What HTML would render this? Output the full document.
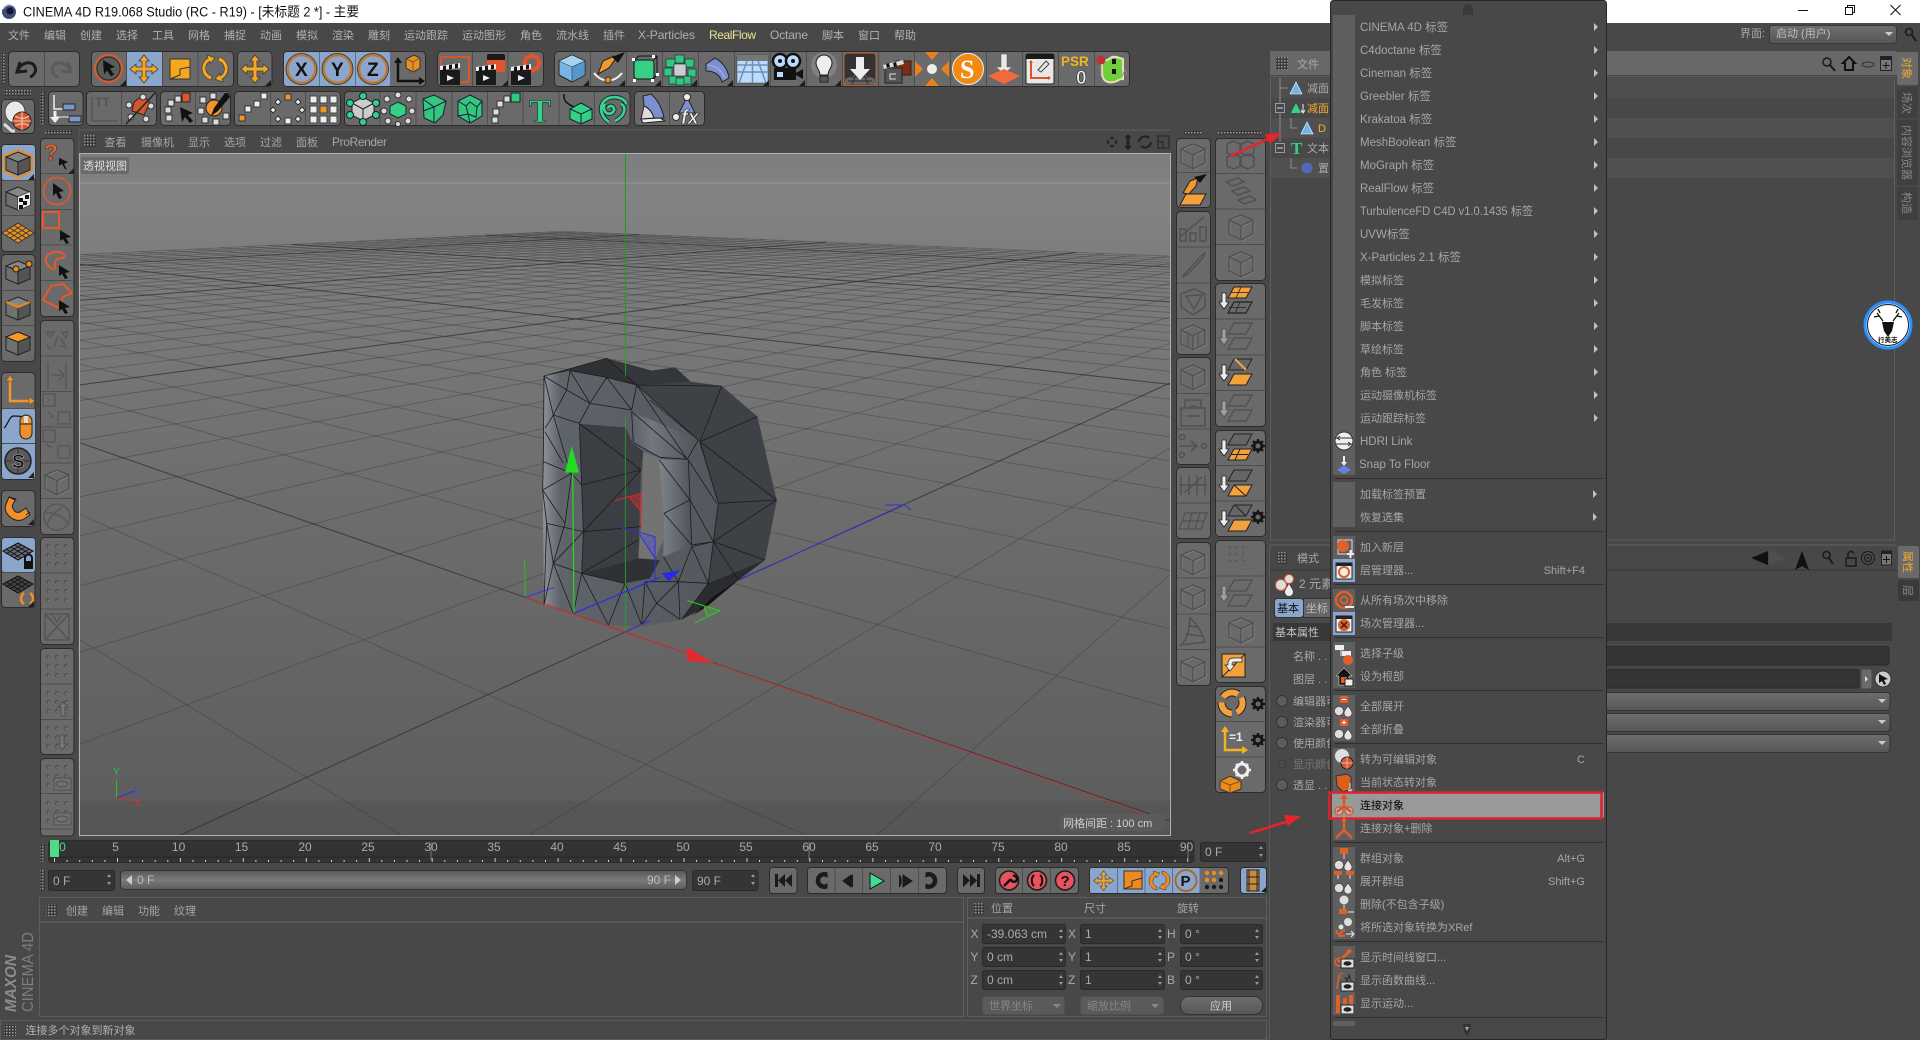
<!DOCTYPE html>
<html lang="zh"><head><meta charset="utf-8"><title>CINEMA 4D</title>
<style>
html,body{margin:0;padding:0;background:#484848;overflow:hidden;width:1920px;height:1040px}
svg{display:block;overflow:hidden}
text{font-family:"Liberation Sans","Noto Sans CJK SC",sans-serif;font-size:11px;fill:#aaa}
.l{font-size:12px}.m{fill:#b0b0b0}.p{fill:#a6a6a6}
.b{font-weight:bold;fill:#111;font-size:19px}
.g{fill:#6a6a6a;stroke:#2c2c2c;stroke-width:1}
.d{stroke:#4e4e4e;stroke-width:1;fill:none}
.f{fill:#353535;stroke:#2a2a2a}
</style></head><body>
<svg xmlns="http://www.w3.org/2000/svg" width="1920" height="1040" viewBox="0 0 1920 1040">
<defs>
<linearGradient id="vb" x1="0" y1="0" x2="0" y2="1"><stop offset="0" stop-color="#7d7d7d"/><stop offset=".06" stop-color="#838383"/><stop offset=".14" stop-color="#7e7e7e"/><stop offset=".5" stop-color="#6d6d6d"/><stop offset=".948" stop-color="#5e5e5e"/><stop offset=".95" stop-color="#575757"/><stop offset="1" stop-color="#555"/></linearGradient>
<linearGradient id="sl" x1="0" y1="0" x2="0" y2="1"><stop offset="0" stop-color="#585858"/><stop offset=".5" stop-color="#7a7a7a"/><stop offset="1" stop-color="#5c5c5c"/></linearGradient>
<linearGradient id="cb" x1="0" y1="0" x2="0" y2="1"><stop offset="0" stop-color="#6e6e6e"/><stop offset="1" stop-color="#565656"/></linearGradient>
<linearGradient id="fc" x1="0" y1="0" x2="1" y2="0"><stop offset="0" stop-color="#8e939a"/><stop offset=".1" stop-color="#5f646b"/><stop offset="1" stop-color="#53575e"/></linearGradient>
<linearGradient id="fr" x1="0" y1="0" x2="1" y2="0"><stop offset="0" stop-color="#80858c"/><stop offset=".4" stop-color="#6d7278"/><stop offset="1" stop-color="#50545a"/></linearGradient>
<linearGradient id="ff" x1="0" y1="0" x2="1" y2="0"><stop offset="0" stop-color="#5d6268"/><stop offset=".3" stop-color="#72777e"/><stop offset="1" stop-color="#505459"/></linearGradient>
<pattern id="gp" width="3" height="3" patternUnits="userSpaceOnUse"><rect width="3" height="3" fill="#3a3a3a"/><rect width="1.5" height="1.5" fill="#9a9a9a"/></pattern>
<clipPath id="vc"><rect x="80" y="154" width="1090" height="681"/></clipPath>
<g id="gc"><polygon points="17,7 29,12 17,17 5,12" fill="#868686" stroke="#222"/><polygon points="5,12 17,17 17,30 5,25" fill="#707070" stroke="#222"/><polygon points="29,12 17,17 17,30 29,25" fill="#545454" stroke="#222"/></g>
<g id="ec" fill="none"><path d="M17 7l12 5v14l-12 6-12-6V12zM5 12l12 6 12-6M17 18v14" stroke="#7d7d7d" stroke-width="1.4" transform="translate(.8,.8)"/><path d="M17 7l12 5v14l-12 6-12-6V12zM5 12l12 6 12-6M17 18v14" stroke="#505050" stroke-width="1.4"/></g>
<g id="ed"><g fill="#535353"><circle cx="8" cy="9" r="2.2"/><circle cx="17" cy="9" r="2.2"/><circle cx="26" cy="9" r="2.2"/><circle cx="8" cy="18" r="2.2"/><circle cx="17" cy="18" r="2.2"/><circle cx="26" cy="18" r="2.2"/><circle cx="8" cy="27" r="2.2"/><circle cx="17" cy="27" r="2.2"/><circle cx="26" cy="27" r="2.2"/></g><g fill="#787878"><circle cx="8.6" cy="9.6" r="1.2"/><circle cx="17.6" cy="9.6" r="1.2"/><circle cx="26.6" cy="9.6" r="1.2"/><circle cx="8.6" cy="18.6" r="1.2"/><circle cx="17.6" cy="18.6" r="1.2"/><circle cx="26.6" cy="18.6" r="1.2"/><circle cx="8.6" cy="27.6" r="1.2"/><circle cx="17.6" cy="27.6" r="1.2"/><circle cx="26.6" cy="27.6" r="1.2"/></g></g>
<path id="mv" d="M18 4l5 6h-3v6h6v-3l6 5-6 5v-3h-6v6h3l-5 6-5-6h3v-6h-6v3l-6-5 6-5v3h6v-6h-3z" fill="#f5a623" stroke="#3a3a3a" stroke-width=".8"/>
<path id="tc" d="M6 6V0L0 6z" fill="#1f1f1f"/>
<g id="dw"><path d="M6 3h4v9h3l-5 7-5-7h3z" fill="#eee" stroke="#222" stroke-width=".8"/></g>
<g id="pl"><polygon points="14,4 32,4 26,15 8,15" fill="none" stroke="#222" stroke-width="1.2"/></g>
<g id="or"><polygon points="14,4 32,4 26,15 8,15" fill="#f3a13c" stroke="#222"/></g>
<g id="gr"><polygon points="14,4 32,4 26,15 8,15" fill="#666" stroke="#222"/></g>
<g id="gear"><circle cx="0" cy="0" r="4" fill="none" stroke="#161616" stroke-width="3"/><path d="M0-7v3M0 4v3M-7 0h3M4 0h3M-5-5l2 2M3 3l2 2M5-5l-2 2M-3 3l-2 2" stroke="#161616" stroke-width="2.2"/></g>
<g id="bd"><circle cx="6" cy="16" r="4.6" fill="#ddd" stroke="#333" stroke-width=".6"/><path d="M15 11c2 3 4 5 4 7a4 4 0 0 1-8 0c0-2 2-4 4-7z" fill="#e4e4e4" stroke="#333" stroke-width=".6"/></g>
<g id="ey"><rect x="8" y="13" width="13" height="9" fill="#ddd" stroke="#222"/><ellipse cx="14.5" cy="17.5" rx="4" ry="2.2" fill="#222"/></g>
</defs>

<rect width="1920" height="1040" fill="#484848"/>
<!-- title bar -->
<rect width="1920" height="23" fill="#fff"/>
<circle cx="9" cy="12" r="7" fill="#3b4c7a"/><circle cx="10" cy="11" r="3.5" fill="#11162c"/><path d="M3 9a7 7 0 0 1 8-4" stroke="#c9c9d9" fill="none" stroke-width="1.5"/>
<text x="23" y="16.5" textLength="336" lengthAdjust="spacingAndGlyphs" style="font-size:13.5px;fill:#111">CINEMA 4D R19.068 Studio (RC - R19) - [未标题 2 *] - 主要</text>
<path d="M1798 10.5h10" stroke="#111"/>
<path d="M1845.5 7.5h7v7h-7zM1847.5 7.5v-2h7v7h-2" fill="none" stroke="#111"/>
<path d="M1890.5 5l10 10M1900.5 5l-10 10" stroke="#111"/>

<!-- main menu -->
<g class="m">
<text class="m" x="8" y="39">文件</text><text class="m" x="44" y="39">编辑</text><text class="m" x="80" y="39">创建</text><text class="m" x="116" y="39">选择</text><text class="m" x="152" y="39">工具</text><text class="m" x="188" y="39">网格</text><text class="m" x="224" y="39">捕捉</text><text class="m" x="260" y="39">动画</text><text class="m" x="296" y="39">模拟</text><text class="m" x="332" y="39">渲染</text><text class="m" x="368" y="39">雕刻</text><text class="m" x="404" y="39">运动跟踪</text><text class="m" x="462" y="39">运动图形</text><text class="m" x="520" y="39">角色</text><text class="m" x="556" y="39">流水线</text><text class="m" x="603" y="39">插件</text><text class="m l" x="638" y="39" textLength="57">X-Particles</text><text x="709" y="39" class="l" textLength="47" style="fill:#e6e68c">RealFlow</text><text class="m l" x="770" y="39" textLength="38">Octane</text><text class="m" x="822" y="39">脚本</text><text class="m" x="858" y="39">窗口</text><text class="m" x="894" y="39">帮助</text>
</g>

<!-- toolbar row 1 -->
<rect x="1" y="52" width="4" height="32" fill="url(#gp)"/>
<rect class="g" x="8.5" y="51.5" width="71" height="35" rx="4"/>
<path class="d" d="M44.5 52v34"/>
<g transform="translate(8,51)"><path d="M12 11l-3 10 10-1M10 19c4-8 14-10 17-3 2 5-2 9-5 10" fill="none" stroke="#1d1d1d" stroke-width="3"/></g>
<g transform="translate(44,51)"><path d="M24 11l3 10-10-1M26 19c-4-8-14-10-17-3-2 5 2 9 5 10" fill="none" stroke="#5b5b5b" stroke-width="3"/></g>

<rect class="g" x="91.5" y="51.5" width="142" height="35" rx="4"/>
<rect x="126" y="52" width="36" height="34" fill="#8aa6cc"/>
<path class="d" d="M126.5 52v34M162.5 52v34M198 52v34"/>
<g transform="translate(91,51)"><circle cx="17.5" cy="17.5" r="13.5" fill="#5c5c5c" stroke="#de5a27" stroke-width="2"/><circle cx="17.5" cy="17.5" r="11.5" fill="none" stroke="#2a2a2a"/><path d="M12 9l12 7-5 1.500 4 6-3 2-4-6-3 4z" fill="#111"/><path d="M29 35h6v-6z" fill="#1d1d1d"/></g>
<use href="#mv" x="126" y="51"/>
<g transform="translate(162,51)"><rect x="8" y="8" width="20" height="20" fill="#f5a81f" stroke="#333"/><path d="M8 28l10-4v-6l10-2" fill="none" stroke="#333"/></g>
<g transform="translate(197,51)"><path d="M22 6a12 12 0 0 1 3 22l1 3-8-3 5-6v3a8 8 0 0 0-2-15zM14 29a12 12 0 0 1-3-22l-1-3 8 3-5 6v-3a8 8 0 0 0 2 15z" fill="#f5a623" stroke="#333" stroke-width=".6"/></g>
<rect class="g" x="237.500" y="51.500" width="34.500" height="35" rx="4"/><use href="#mv" x="237" y="51"/><use href="#tc" x="265" y="80"/>

<rect class="g" x="283.500" y="51.500" width="142" height="35" rx="4"/>
<rect x="284" y="52" width="107" height="34" rx="3" fill="#8aa6cc"/>
<path d="M319.500 52v34M355.500 52v34M390.500 52v34" stroke="#5d6f8c"/>
<g fill="#8aa6cc" stroke="#c2762a" stroke-width="2.500"><circle cx="301.500" cy="69" r="14"/><circle cx="337.500" cy="69" r="14"/><circle cx="373" cy="69" r="14"/></g>
<g fill="none" stroke="#333" stroke-width=".8"><circle cx="301.500" cy="69" r="15.500"/><circle cx="337.500" cy="69" r="15.500"/><circle cx="373" cy="69" r="15.500"/></g>
<text class="b" x="295" y="76">X</text><text class="b" x="331" y="76">Y</text><text class="b" x="367" y="76">Z</text>
<g transform="translate(391,51)"><path d="M7 10v20h24" fill="none" stroke="#111" stroke-width="2.500"/><path d="M3 12l4-6 4 6zM28 26l6 4-6 4z" fill="#111"/><polygon points="15,8 23,4 29,7 29,17 22,21 15,17" fill="#e89028" stroke="#333"/><path d="M15 8l7 3 7-4M22 11v10" fill="none" stroke="#8a4f10"/></g>

<rect class="g" x="437.500" y="51.500" width="106" height="35" rx="4"/>
<path class="d" d="M472.500 52v34M508 52v34"/>
<g transform="translate(437,51)"><path d="M4 26V6h28v25H22" fill="none" stroke="#d9552a" stroke-width="2"/><rect x="3" y="19" width="20" height="15" fill="#1a1a1a"/><path d="M3 15l20-3v5l-20 2z" fill="#eee"/><path d="M6 15l3-.5v4.500l-3 .5zM12 14l3-.5v4.500l-3 .5zM18 13l3-.5v4.500l-3 .5z" fill="#111"/><path d="M10 24l7 3-7 3z" fill="#eee"/></g>
<g transform="translate(473,51)"><rect x="14" y="3" width="18" height="18" rx="2" fill="#1a1a1a"/><rect x="14" y="9" width="18" height="12" fill="#e2552a"/><rect x="3" y="19" width="20" height="15" fill="#1a1a1a"/><path d="M3 16l20-3v5l-20 2z" fill="#eee"/><path d="M6 16l3-.5v4.500l-3 .5zM12 15l3-.5v4.500l-3 .5zM18 14l3-.5v4.500l-3 .5z" fill="#111"/><path d="M10 24l7 3-7 3z" fill="#eee"/><use href="#tc" x="29" y="29"/></g>
<g transform="translate(508,51)"><circle cx="24" cy="12" r="7" fill="none" stroke="#e2552a" stroke-width="4"/><path d="M24 2v4M24 18v4M14 12h4M30 12h4M17 5l3 3M28 16l3 3M31 5l-3 3M20 16l-3 3" stroke="#e2552a" stroke-width="2.500"/><rect x="3" y="19" width="20" height="15" fill="#1a1a1a"/><path d="M3 16l20-3v5l-20 2z" fill="#eee"/><path d="M6 16l3-.5v4.500l-3 .5zM12 15l3-.5v4.500l-3 .5zM18 14l3-.5v4.500l-3 .5z" fill="#111"/><path d="M10 24l7 3-7 3z" fill="#eee"/></g>

<rect class="g" x="554.500" y="51.500" width="575" height="35" rx="4"/>
<path class="d" d="M590.500 52v34M626.500 52v34M662.500 52v34M698.500 52v34M734.500 52v34M770.500 52v34M806.500 52v34M842.500 52v34M878.500 52v34M914.500 52v34M950.500 52v34M986.500 52v34M1022.500 52v34M1058.500 52v34M1094.500 52v34"/>
<g transform="translate(554,51)"><polygon points="18,4 31,10 31,24 18,31 5,24 5,10" fill="#78b4e6" stroke="#222"/><polygon points="18,4 31,10 18,16 5,10" fill="#a6d2f2" stroke="#222" stroke-width=".5"/><polygon points="18,16 31,10 31,24 18,31" fill="#5796cc" stroke="#222" stroke-width=".5"/><use href="#tc" x="29" y="29"/></g>
<g transform="translate(590,51)"><path d="M24 5L13 10 8 23l11-6 7-10z" fill="#f09a2a" stroke="#222"/><path d="M22 6l13-5-7 11z" fill="#111"/><path d="M4 22c8 10 20 10 28 0" fill="none" stroke="#eee" stroke-width="2"/><circle cx="18" cy="29" r="3" fill="#e88a1c" stroke="#333"/><use href="#tc" x="29" y="29"/></g>
<g transform="translate(626,51)"><rect x="8" y="9" width="20" height="19" rx="3" fill="#35d083" stroke="#111"/><path d="M8 9l5-4h18v18l-3 5M28 9l3-4" fill="none" stroke="#111"/><g fill="#fff"><rect x="6" y="7" width="3" height="3"/><rect x="26" y="4" width="3" height="3"/><rect x="30" y="22" width="3" height="3"/><rect x="7" y="28" width="3" height="3"/><rect x="25" y="28" width="3" height="3"/></g><use href="#tc" x="29" y="29"/></g>
<g transform="translate(662,51)" stroke="#123" stroke-width=".6"><g fill="#35c67e"><rect x="13" y="4" width="9" height="8"/><rect x="23" y="8" width="9" height="8"/><rect x="4" y="8" width="9" height="8"/><rect x="2" y="17" width="8" height="8"/><rect x="26" y="18" width="8" height="8"/><rect x="7" y="25" width="8" height="8"/><rect x="21" y="25" width="8" height="8"/><rect x="14" y="27" width="8" height="7"/></g><rect x="12" y="13" width="12" height="12" fill="#ccc"/><use href="#tc" x="29" y="29"/></g>
<g transform="translate(698,51)"><path d="M8 13L17 7C25 11 30 19 31 27L24 31C22 24 17 20 8 20Z" fill="#7c8fcf" stroke="#222"/><path d="M10 14C18 15 24 20 27 28" fill="none" stroke="#a8b6e6"/><use href="#tc" x="29" y="29"/></g>
<g transform="translate(734,51)"><rect x="3" y="4" width="31" height="28" fill="#bcdcff" stroke="#333" stroke-width=".5"/><rect x="3" y="4" width="31" height="6" fill="#777"/><path d="M3 14h31M3 21h31M13 10l-8 22M24 10l8 22M18.500 10v22" stroke="#6d8fb4" stroke-width="1.500" fill="none"/><use href="#tc" x="29" y="29"/></g>
<g transform="translate(770,51)"><circle cx="10" cy="10" r="7" fill="#bcdcff" stroke="#111" stroke-width="2.500"/><circle cx="23" cy="10" r="7" fill="#bcdcff" stroke="#111" stroke-width="2.500"/><circle cx="10" cy="10" r="2" fill="#111"/><circle cx="23" cy="10" r="2" fill="#111"/><rect x="4" y="17" width="22" height="12" fill="#111"/><rect x="7" y="21" width="6" height="5" fill="#bcdcff"/><path d="M26 22l7-4v10l-7-4z" fill="#111"/><use href="#tc" x="29" y="29"/></g>
<g transform="translate(806,51)"><circle cx="18" cy="14" r="13" fill="#9a9a9a" opacity=".5"/><path d="M18 4a8 8 0 0 1 8 8c0 5-4 7-4 12h-8c0-5-4-7-4-12a8 8 0 0 1 8-8z" fill="#eee" stroke="#222"/><rect x="14" y="25" width="8" height="6" fill="#555" stroke="#222"/><use href="#tc" x="29" y="29"/></g>
<g transform="translate(842,51)"><rect x="2" y="2" width="32" height="32" rx="3" fill="#333" stroke="#c5662a"/><path d="M3 28l15-6 15 6v5H3z" fill="#666"/><path d="M9 26l18 0M6 30h24M14 23l-4 10M22 23l4 10" stroke="#2a2a2a"/><path d="M14 6h8v12h6L18 29 8 18h6z" fill="#eee"/></g>
<g transform="translate(878,51)"><rect x="18" y="10" width="15" height="14" fill="#7e2c14" stroke="#222"/><rect x="7" y="17" width="17" height="15" fill="#555" stroke="#222"/><path d="M5 14l20-5 1 4-20 5z" fill="#ddd"/><path d="M8 13l3-1 1 4-3 1zM15 12l3-1 1 4-3 1z" fill="#111"/><path d="M18 23h-6v5h6" stroke="#ddd" fill="none"/></g>
<g transform="translate(914,51)"><circle cx="18" cy="18" r="5" fill="#eee"/><path d="M11 1h14l-7 8zM11 35h14l-7-8zM1 10v16l8-8zM35 10v16l-8-8z" fill="#e8801e"/></g>
<g transform="translate(950,51)"><circle cx="18" cy="18" r="15.500" fill="#f08a12" stroke="#eee" stroke-width="1"/><text x="10" y="27" style="font:bold 26px 'Liberation Serif';fill:#fff">S</text></g>
<g transform="translate(986,51)"><path d="M15 3h6v13h5l-8 7-8-7h5z" fill="#e9e9e9" stroke="#555" stroke-width=".5"/><polygon points="18,18 34,25 18,33 2,25" fill="#f06a3c"/></g>
<g transform="translate(1022,51)"><rect x="4" y="3" width="28" height="30" rx="2" fill="#e8e8e8" stroke="#222"/><rect x="4" y="3" width="28" height="5" fill="#1a1a1a"/><path d="M9 10v17h19" fill="none" stroke="#d9552a" stroke-width="2"/><path d="M7 12l2-3 2 3zM26 25l3 2-3 2z" fill="#d9552a"/><path d="M16 19l8-9 3 3-8 8z" fill="none" stroke="#444"/></g>
<text x="1061" y="66" style="font:bold 13.500px 'Liberation Sans';fill:#f5b31e">PSR</text>
<text x="1076" y="84" style="font:bold 19px 'Liberation Sans';fill:#eee;stroke:#222;stroke-width:.6">0</text>
<g transform="translate(1094,51)"><path d="M8 12c0 10-1 17 6 19s12-4 15-3V8c-6-2-10-4-14 0-2 2-4 0-7 4z" fill="#6ecf3a" stroke="#e9dfb5" stroke-width="2"/><circle cx="7" cy="9" r="4.500" fill="#c03030"/><path d="M7 13v12" stroke="#9a9a9a"/><rect x="18" y="8" width="4" height="5" fill="#111"/><rect x="18" y="18" width="4" height="5" fill="#111"/><path d="M28 25l3-6 2 5" stroke="#888" fill="none"/></g>

<!-- toolbar row 2 -->
<rect x="4" y="90" width="27" height="6" fill="url(#gp)"/>
<rect x="40" y="91" width="5" height="34" fill="url(#gp)"/>
<rect class="g" x="1.500" y="99.500" width="33" height="34" rx="4"/>
<g transform="translate(1,99)"><ellipse cx="14" cy="13" rx="10" ry="11" fill="#e9e9e9" stroke="#444"/><circle cx="21" cy="22" r="9" fill="#d9552a" stroke="#222"/><path d="M12 22h18M21 13v18M14 17c5 3 10 3 14 0M14 27c5-3 10-3 14 0" stroke="#eee" fill="none" stroke-width=".8"/><path d="M3 25l8 7h3" stroke="#ddd" stroke-width="3" fill="none"/></g>
<rect class="g" x="48.500" y="91.500" width="34.500" height="34" rx="4"/>
<g transform="translate(48,91)"><path d="M6 4v14h12M8 22v0" stroke="#eee" stroke-width="1.500" fill="none"/><path d="M7 20v8" stroke="#eee" stroke-width="3"/><path d="M2 26h10l-5 6z" fill="#eee"/><rect x="15" y="13" width="12" height="6" fill="#7c97c6" stroke="#222"/><rect x="21" y="25" width="12" height="6" fill="#7c97c6" stroke="#222"/><path d="M8 26h13" stroke="#eee"/></g>
<rect class="g" x="86.500" y="91.500" width="70" height="34" rx="4"/><path class="d" d="M121.500 92v33"/>
<g transform="translate(86,91)" opacity=".8"><path d="M6 6v24h26" fill="none" stroke="#545454" stroke-width="1.500"/><text x="9" y="15" style="fill:#4f4f4f;font-size:12px;font-weight:bold">TT</text></g>
<g transform="translate(122,91)"><polygon points="12,11 21,4 28,12 22,24 10,20" fill="#d9552a" stroke="#222" opacity=".95"/><g fill="#ddd" stroke="#333"><circle cx="21" cy="6" r="3"/><circle cx="7" cy="14" r="3"/><circle cx="29" cy="15" r="3"/><circle cx="9" cy="26" r="3"/><circle cx="24" cy="28" r="3"/></g><path d="M4 33L33 2" stroke="#222" stroke-width="1.500"/></g>
<rect class="g" x="160.500" y="91.500" width="70" height="34" rx="4"/><path class="d" d="M195.500 92v33"/>
<g transform="translate(160,91)"><g fill="#ddd" stroke="#333"><rect x="6" y="24" width="6" height="6"/><rect x="5" y="16" width="6" height="6"/><rect x="8" y="9" width="6" height="6"/><rect x="15" y="5" width="6" height="6"/></g><rect x="22" y="2" width="8" height="9" fill="#d9552a" stroke="#222"/><path d="M20 16l2 15 3-5 5 6 3-2-5-6 5-2z" fill="#111"/></g>
<g transform="translate(196,91)"><g fill="#ddd" stroke="#333"><rect x="4" y="6" width="6" height="6"/><rect x="14" y="2" width="6" height="6"/><rect x="2" y="17" width="6" height="6"/><rect x="6" y="26" width="6" height="6"/><rect x="17" y="28" width="6" height="6"/><rect x="27" y="22" width="6" height="6"/></g><circle cx="18" cy="17" r="8" fill="#f0962a" stroke="#222"/><path d="M32 2l-3 0-11 15-3 8 7-5 12-14z" fill="#111"/></g>
<rect class="g" x="234.500" y="91.500" width="106" height="34" rx="4"/><path class="d" d="M270.500 92v33M305.500 92v33"/>
<g transform="translate(234,91)" stroke="#333"><rect x="5" y="24" width="6" height="6" fill="#f0962a"/><rect x="11" y="15" width="6" height="6" fill="#eee"/><rect x="20" y="10" width="6" height="6" fill="#eee"/><rect x="27" y="2" width="6" height="6" fill="#eee"/></g>
<g transform="translate(270,91)" stroke="#333" fill="#eee"><rect x="15" y="3" width="6" height="6" fill="#f0962a"/><path d="M8 8l3 3-3 3-3-3zM28 8l3 3-3 3-3-3zM3 16l3 3-3 3-3-3zM32 16l3 3-3 3-3-3zM8 25l3 3-3 3-3-3zM28 25l3 3-3 3-3-3z"/><rect x="15" y="27" width="6" height="6"/></g>
<g transform="translate(306,91)" stroke="#444" fill="#eee"><rect x="4" y="5" width="7" height="7"/><rect x="14" y="5" width="7" height="7"/><rect x="24" y="5" width="7" height="7"/><rect x="4" y="15" width="7" height="7"/><rect x="14" y="15" width="7" height="7" fill="#f0962a"/><rect x="24" y="15" width="7" height="7"/><rect x="4" y="25" width="7" height="7"/><rect x="14" y="25" width="7" height="7"/><rect x="24" y="25" width="7" height="7"/></g>
<rect class="g" x="344.500" y="91.500" width="285.500" height="34" rx="4"/><path class="d" d="M380 92v33M416 92v33M452 92v33M487.500 92v33M523 92v33M559 92v33M594.500 92v33"/>
<g transform="translate(345,91)"><polygon points="18,6 29,12 29,24 18,30 7,24 7,12" fill="#ccc" stroke="#222"/><path d="M7 12l11 6 11-6M18 18v12" stroke="#222" fill="none"/><g fill="#35d083" stroke="#123"><circle cx="18" cy="5" r="3.500"/><circle cx="5" cy="12" r="3.500"/><circle cx="31" cy="12" r="3.500"/><circle cx="5" cy="24" r="3.500"/><circle cx="31" cy="24" r="3.500"/><circle cx="18" cy="31" r="3.500"/></g></g>
<g transform="translate(380,91)"><polygon points="18,11 26,15 26,23 18,27 10,23 10,15" fill="#35d083" stroke="#123"/><g fill="#ddd" stroke="#333"><circle cx="18" cy="4" r="3"/><circle cx="7" cy="8" r="3"/><circle cx="29" cy="8" r="3"/><circle cx="4" cy="20" r="3"/><circle cx="32" cy="20" r="3"/><circle cx="8" cy="30" r="3"/><circle cx="28" cy="30" r="3"/><circle cx="18" cy="33" r="2.500"/></g></g>
<g transform="translate(416,91)"><path d="M7 8l11-4 12 6-3 14-8 8-11-5z" fill="#35c67e" stroke="#123"/><path d="M7 8l11 8 12-6M18 16v15M7 20l11-4" stroke="#123" fill="none"/></g>
<g transform="translate(452,91)"><polygon points="18,4 30,10 30,25 18,32 6,25 6,10" fill="#35c67e" stroke="#123"/><path d="M6 10l8 5 4-4 7 5 5-6M14 15l2 8-10 2M16 23l8 3 1-10M18 32l-2-9" stroke="#123" fill="none"/></g>
<g transform="translate(487,91)"><g fill="#ddd" stroke="#333"><rect x="5" y="26" width="6" height="6"/><rect x="6" y="18" width="6" height="6"/><rect x="10" y="10" width="6" height="6"/><rect x="17" y="5" width="6" height="6"/></g><rect x="24" y="2" width="9" height="9" fill="#35c67e" stroke="#123"/></g>
<text x="529" y="122" style="font:bold 33px 'Liberation Serif';fill:#39d28a;stroke:#123;stroke-width:.6">T</text>
<g transform="translate(559,91)"><path d="M5 3c-1 8 4 10 12 14" fill="none" stroke="#111" stroke-width="1.500"/><polygon points="22,12 33,18 33,28 22,33 11,28 11,18" fill="#35d083" stroke="#123"/><path d="M11 18l11 5 11-5M22 23v10" stroke="#123" fill="none"/></g>
<g transform="translate(595,91)" fill="none" stroke="#123" stroke-width="4.500"><path d="M14 31c-10-6-11-20 0-24 10-3 18 3 17 6"/><path d="M10 13c-4 6 3 13 8 8 4-4-3-9-5-4"/><path d="M20 30c10-5 12-14 6-17"/></g>
<g transform="translate(595,91)" fill="none" stroke="#3ad28c" stroke-width="2.800"><path d="M14 31c-10-6-11-20 0-24 10-3 18 3 17 6"/><path d="M10 13c-4 6 3 13 8 8 4-4-3-9-5-4"/><path d="M20 30c10-5 12-14 6-17"/></g>
<rect class="g" x="634.500" y="91.500" width="70" height="34" rx="4"/><path class="d" d="M669.500 92v33"/>
<g transform="translate(634,91)"><path d="M7 28l19-1 5 3-22 2z" fill="#eee" stroke="#222"/><path d="M9 5l8-2c7 6 11 14 13 24l-10 0c-2-6-5-10-10-12z" fill="#7c8fcf" stroke="#222"/><path d="M10 15c5 2 8 6 10 12l-13 1z" fill="#ddd" stroke="#222"/></g>
<g transform="translate(670,91)"><polygon points="17,6 25,22 9,22" fill="#7c8fcf" stroke="#222"/><circle cx="17" cy="6" r="3.500" fill="#eee" stroke="#333"/><circle cx="6" cy="26" r="3.500" fill="#eee" stroke="#333"/><text x="11" y="33" style="font:italic bold 20px 'Liberation Sans';fill:#eee;stroke:#222;stroke-width:.6">fx</text></g>

<!-- left column 1 -->
<rect class="g" x="1.500" y="144.500" width="33.500" height="107" rx="4"/>
<rect x="2" y="145" width="33" height="35" rx="3" fill="#8aa6cc"/>
<path class="d" d="M2 180.500h33M2 215.500h33"/>
<g transform="translate(1,145)"><use href="#gc"/><polygon points="17,5 31,11 31,26 17,33 3,26 3,11" fill="none" stroke="#f08a12" stroke-width="2"/><use href="#tc" x="27" y="29"/></g>
<g transform="translate(1,180)"><use href="#gc"/><g fill="#111"><polygon points="17,17 29,12 29,25 17,30" fill="#eee"/><rect x="18" y="18" width="4" height="4"/><rect x="24" y="15" width="4" height="4"/><rect x="22" y="21" width="4" height="4"/><rect x="18" y="25" width="4" height="4"/></g></g>
<g transform="translate(1,215)"><polygon points="17,8 33,18 17,28 1,18" fill="#e8901e" stroke="#333"/><path d="M9 13l16 10M13 10.500l16 10M5 15.500l16 10M25 13L9 23M21 10.500L5 20.500M29 15.500l-16 10" stroke="#333" stroke-width=".8"/></g>
<rect class="g" x="1.500" y="254.500" width="33.500" height="107" rx="4"/><path class="d" d="M2 290.500h33M2 325.500h33"/>
<g transform="translate(1,254)"><use href="#gc"/><circle cx="15" cy="15" r="3" fill="#f08a12" stroke="#222"/><circle cx="28" cy="10" r="3" fill="#f08a12" stroke="#222"/></g>
<g transform="translate(1,290)"><use href="#gc"/><path d="M5 12l12 5 12-5" stroke="#f08a12" stroke-width="2" fill="none"/></g>
<g transform="translate(1,325)"><use href="#gc"/><polygon points="17,7 29,12 17,17 5,12" fill="#f39a2a" stroke="#222"/></g>
<rect class="g" x="1.500" y="372.500" width="33.500" height="107" rx="4"/>
<rect x="2" y="408" width="33" height="71" rx="3" fill="#8aa6cc"/><path class="d" d="M2 408.500h33M2 443.500h33"/>
<g transform="translate(1,372)"><path d="M9 7v22h21" fill="none" stroke="#f0962a" stroke-width="2.500"/><path d="M5 9l4-6 4 6zM28 25l6 4-6 4z" fill="#f0962a" stroke="#333" stroke-width=".4"/></g>
<g transform="translate(1,408)"><path d="M3 20c4-3 5-12 10-12 3 0 6 0 9 1" fill="none" stroke="#111" stroke-width="1.200"/><rect x="19" y="7" width="12" height="24" rx="6" fill="#f0902a" stroke="#222"/><path d="M19 16h12M25 7v9" stroke="#222"/><rect x="23" y="8" width="4" height="7" fill="#ddd"/></g>
<g transform="translate(1,443)"><circle cx="17" cy="18" r="13" fill="#5a5a5a" stroke="#222" stroke-width="1.500"/><path d="M4 18h26M17 5v26" stroke="#333"/><text x="11" y="25" style="font:bold 19px 'Liberation Sans';fill:#111;stroke:#fff;stroke-width:.3">S</text><use href="#tc" x="27" y="29"/></g>
<rect class="g" x="1.500" y="490.500" width="33.500" height="36" rx="4"/>
<g transform="translate(1,490)"><path d="M8 7l-3 7c-2 5 0 9 3 12 4 4 10 6 15 3l6-4-4-7-6 4c-3 1-5 0-6-2-2-2-2-4-1-6l3-5z" fill="#f0902a" stroke="#222"/><path d="M8 7l6 3M25 25l4-3" stroke="#222"/><use href="#tc" x="27" y="29"/></g>
<rect class="g" x="1.500" y="537.500" width="33.500" height="70" rx="4"/>
<rect x="2" y="538" width="33" height="34" rx="3" fill="#8aa6cc"/><path class="d" d="M2 572.500h33"/>
<g transform="translate(1,537)"><polygon points="17,6 32,14 17,23 2,14" fill="#667" stroke="#111"/><path d="M10 10l15 9M5 12l15 9M14 8l15 9M24 10L9 19M28 12l-15 9M20 8L5 17" stroke="#111" stroke-width=".8"/><rect x="23" y="24" width="9" height="8" fill="#111"/><path d="M24 24v-3a3.500 3.500 0 0 1 7 0v3" fill="none" stroke="#111" stroke-width="2"/></g>
<g transform="translate(1,572)"><polygon points="17,4 32,12 17,21 2,12" fill="#444" stroke="#111"/><path d="M10 8l15 9M5 10l15 9M14 6l15 9M24 8L9 17M28 10l-15 9M20 6L5 15" stroke="#111" stroke-width=".8"/><path d="M23 21c-4 3-4 8 0 11M29 21c4 3 4 8 0 11" stroke="#f0902a" stroke-width="2.500" fill="none"/><use href="#tc" x="27" y="29"/></g>

<!-- left column 2 -->
<rect x="45" y="130" width="27" height="5" fill="url(#gp)"/>
<rect class="g" x="40.500" y="138.500" width="33.500" height="178" rx="4"/><path class="d" d="M41 173.500h33M41 209.500h33M41 245h33M41 280.500h33"/>
<g transform="translate(40,138)"><text x="4" y="22" style="font:bold 23px 'Liberation Sans';fill:#f0622a;stroke:#333;stroke-width:.5">?</text><path d="M19 20l9 4-4 2 3 6-2-1-3-5-3 2z" fill="#111"/><use href="#tc" x="28" y="30"/></g>
<g transform="translate(40,173)"><circle cx="17" cy="18" r="13.500" fill="none" stroke="#e8582a" stroke-width="1.500"/><path d="M13 10l11 8-5 1 3 6-3 1-3-6-3 3z" fill="#111"/></g>
<g transform="translate(40,209)"><rect x="3" y="3" width="16" height="16" fill="none" stroke="#e8582a" stroke-width="2"/><path d="M20 21l11 7-5 1 3 5-3 1-3-5-3 2z" fill="#111"/></g>
<g transform="translate(40,245)"><path d="M6 17c-2-8 8-12 16-9 4 2 3 5-1 5-5 0-7 4-6 9 1 4-5 3-9-5z" fill="none" stroke="#e8582a" stroke-width="2"/><path d="M19 20l11 7-5 1 3 5-3 1-3-5-3 2z" fill="#111"/></g>
<g transform="translate(40,280)"><path d="M3 20L11 6l12-2 9 9-9 4-4 11z" fill="none" stroke="#e8582a" stroke-width="2"/><path d="M19 20l11 7-5 1 3 5-3 1-3-5-3 2z" fill="#111"/></g>
<rect class="g" x="40.500" y="320.500" width="33.500" height="214" rx="4"/><path class="d" d="M41 356h33M41 391.500h33M41 427h33M41 463h33M41 498.500h33"/>
<g fill="none" stroke="#585858" stroke-width="1.500"><path d="M46 332h8l-4 5zM68 332h-6l4 6zM46 345l6 4M60 345l8 4M58 335l-4 12M60 338l6 8"/><path d="M48 362v27M66 362v27M52 375h10M58 369l6 6-6 6"/><rect x="43" y="394" width="12" height="12"/><rect x="58" y="412" width="12" height="12"/><path d="M48 412l6 6"/><rect x="43" y="430" width="12" height="12"/><rect x="58" y="446" width="12" height="12"/><path d="M52 448l-6-4"/><circle cx="57" cy="517" r="13"/><path d="M45 512c8 1 18 4 23 11M47 524c4-8 10-14 16-17"/></g>
<use href="#ec" x="40" y="463"/>
<rect class="g" x="40.500" y="537.500" width="33.500" height="107" rx="4"/><path class="d" d="M41 573h33M41 609h33"/>
<use href="#ed" x="40" y="537"/><use href="#ed" x="40" y="573"/>
<g transform="translate(40,609)" fill="none" stroke="#555" stroke-width="1.500"><rect x="5" y="5" width="24" height="26"/><path d="M5 5l24 26M29 5L5 31M12 5l5 8 5-8"/></g>
<rect class="g" x="40.500" y="648.500" width="33.500" height="106" rx="4"/><path class="d" d="M41 684h33M41 719.500h33"/>
<use href="#ed" x="40" y="648"/><use href="#ed" x="40" y="684"/><use href="#ed" x="40" y="719"/>
<path d="M63 702l5 5h-3v9h-4v-9h-3zM60 735h4v9h3l-5 6-4-6h2z" fill="#777" stroke="#505050"/>
<rect class="g" x="40.500" y="758.500" width="33.500" height="77.500" rx="4"/><path class="d" d="M41 793.500h33M41 829h33"/>
<use href="#ed" x="40" y="758"/><use href="#ed" x="40" y="794"/>
<g fill="#707070" stroke="#505050"><rect x="54" y="778" width="17" height="12"/><rect x="54" y="813" width="17" height="12"/></g><g fill="none" stroke="#505050"><ellipse cx="62" cy="784" rx="6" ry="3"/><ellipse cx="62" cy="819" rx="6" ry="3"/></g>

<!-- view panel -->
<path d="M79 130h1091" stroke="#606060"/>
<path d="M79 130v708" stroke="#5a5a5a"/>
<rect x="84" y="135" width="12" height="12" fill="url(#gp)"/>
<text class="p" x="104.500" y="146">查看</text><text class="p" x="141" y="146">摄像机</text><text class="p" x="188" y="146">显示</text><text class="p" x="224" y="146">选项</text><text class="p" x="260" y="146">过滤</text><text class="p" x="296" y="146">面板</text><text class="p l" x="332" y="146" textLength="55">ProRender</text>
<g fill="#222"><path d="M1112 136l2.500 3h-5zM1112 148l2.500-3h-5zM1106 142l3-2.500v5zM1118 142l-3-2.500v5z"/><path d="M1128 134l4 4h-2.500v8h2.500l-4 4-4-4h2.500v-8h-2.500z"/></g>
<path d="M1139 142a6 6 0 0 1 10-4M1151 142a6 6 0 0 1-10 4" fill="none" stroke="#222" stroke-width="2"/><rect x="1158" y="136" width="11" height="12" fill="none" stroke="#222"/><path d="M1158 142h5v6" fill="none" stroke="#222"/>

<!-- viewport -->
<rect x="79.500" y="153.500" width="1091" height="682" fill="url(#vb)" stroke="#b0b0b0"/>
<path d="M80 183h1090" stroke="#979797"/>
<g id="grid" clip-path="url(#vc)" fill="none"></g>
<g clip-path="url(#vc)">
<path d="M1172 823L713 663" stroke="#b93a3a" stroke-width="1"/>
<path d="M738 580L902 506" stroke="#3030c8"/>
<path d="M885 505h20l6 5" fill="none" stroke="#3030c8"/>
<path d="M625.500 154V377" stroke="#1e9a1e"/>
</g>

<!-- D model -->
<g transform="translate(480,340) scale(.33333)" stroke-linejoin="round">
<polygon points="192,108 380,55 515,92 585,82 632,125 725,138 832,230 890,482 855,660 775,720 680,800 605,838 490,858 385,855 280,820 192,795 188,450 190,350" fill="#3d4044"/>
<polygon points="192,108 270,92 380,112 470,135 560,215 655,300 715,490 700,605 685,730 605,838 490,858 385,855 280,820 192,795 188,450 190,350" fill="url(#fc)"/>
<polygon points="300,252 437,262 458,310 490,335 483,390 475,655 305,700 310,575 305,435" fill="#3b3e42"/>
<polygon points="490,335 540,355 552,520 550,600 524,660 475,655 483,560" fill="#737373"/>
<polygon points="305,700 475,655 540,660 510,715 435,730" fill="#2f3134"/>
<polygon points="537,358 622,360 630,480 635,615 550,650 552,520" fill="url(#fr)"/>
<polygon points="455,215 655,300 622,358 540,352 460,308" fill="url(#ff)"/>
<polygon points="470,135 725,138 832,230 890,482 855,660 775,720 685,730 700,605 715,490 655,300" fill="#3e4145"/>
<polygon points="192,108 380,55 470,135 380,112 270,92" fill="#2f3134"/>
<polygon points="380,55 515,92 585,82 632,125 470,135" fill="#33363a"/>
<polygon points="855,660 775,720 680,800 605,838 685,730" fill="#2a2c2f"/>
<polygon points="700,770 775,720 680,800 640,825" fill="#111"/>
<path fill="none" stroke="#1c1c1c" stroke-width="2.400" d="M192 108L220 225M270 92L260 150L220 225M192 108L260 150L330 190M380 112L330 190M380 112L455 210M470 135L455 210M330 190L298 250M220 225L298 250M330 190L455 210M270 92L330 190M220 225L195 265M195 275L250 370M220 225L270 395M298 250L305 435M190 365L275 400L305 435M188 450L275 400M188 450L255 550M275 400L255 550M200 550L310 575M305 435L310 575M200 550L220 670M255 550L220 670M310 575L220 670M220 670L305 700M310 575L305 700M220 670L192 795M220 670L280 820M305 700L280 820M200 550L192 795M305 435L483 390M310 575L483 560M300 252L483 390M310 575L483 390M305 700L475 600M305 700L435 730M305 700L385 855M435 730L385 855M435 730L485 855M495 725L485 855M495 725L530 790L485 855M530 790L600 838M595 725L530 790M595 725L600 838M635 620L595 725M550 650L595 725M635 620L685 730M635 620L700 605M700 605L855 660M715 490L890 480M700 605L890 480M715 490L660 305M660 305L890 480M660 305L832 230M660 305L725 138M700 605L775 720M625 360L710 490M630 480L700 605M625 360L630 480M630 480L635 615M552 520L630 480M552 520L635 615M538 360L630 480M470 135L622 358M455 215L622 358M510 180L655 300M460 308L540 352L622 358M455 215L460 308M470 135L655 300L622 358M380 55L470 135M192 108L380 55M270 92L380 112L470 135L725 138M635 615L700 605M715 490L700 605L685 730L605 838M192 108L190 350L188 450L200 550L192 795M275 400L305 435M595 725L685 730M495 725L595 725"/>
<path d="M436 0V110M436 230V875" stroke="#2aa52a" stroke-width="2.400"/>
<path d="M136 772L620 940" stroke="#e02828" stroke-width="3"/>
<path d="M136 772L134 660" stroke="#26c026" stroke-width="3"/>
<path d="M136 772L222 742" stroke="#3030e0" stroke-width="3"/>
<path d="M436 875L510 842" stroke="#3030e0" stroke-width="3"/>
<path d="M278 400L282 820" stroke="#22dd22" stroke-width="3.600"/>
<polygon points="275,318 255,398 297,398" fill="#22dd22"/>
<path d="M282 820L540 712" stroke="#2a2ae6" stroke-width="3.600"/>
<polygon points="545,700 602,690 566,724" fill="#2a2ae6"/>
<polygon points="448,472 483,460 483,515" fill="#c03030" fill-opacity=".55"/><path d="M405 482L483 460V560M448 472L483 515" stroke="#e02828" stroke-width="3" fill="none"/>
<polygon points="480,585 525,590 525,655" fill="#5050d0" fill-opacity=".45"/><path d="M420 562L525 590V720M480 585L525 655" stroke="#3030e0" stroke-width="3" fill="none"/>
<polygon points="672,800 720,812 682,828" fill="#5a8a5a" fill-opacity=".6"/><path d="M622 782L720 812L645 848M672 800L682 828" stroke="#26d026" stroke-width="3" fill="none"/>
</g>
<polygon points="687,647 713,663 687,661" fill="#e42a2a"/>
<path d="M686 654l27 9" stroke="#e42a2a" stroke-width="1.500"/>
<!-- small axes -->
<path d="M116.500 780v18" stroke="#2ac02a"/><path d="M116.500 798l18-7" stroke="#3030d0"/><path d="M116.500 798l17 3" stroke="#d03030"/>
<text x="113" y="775" style="font-size:10px;fill:#35c035">Y</text><text x="133" y="795" style="font-size:10px;fill:#4848d8">Z</text><text x="135" y="806" style="font-size:10px;fill:#d83838">X</text>
<rect x="81" y="157" width="48" height="17" rx="2" fill="#6a6a6a"/><text x="83" y="169.500" style="fill:#ddd">透视视图</text>
<rect x="1060" y="814" width="105" height="17" rx="2" fill="#5b5b5b"/><text x="1063" y="827" style="fill:#d0d0d0">网格间距 : 100 cm</text>

<!-- right toolbars -->
<rect x="1184" y="131" width="18" height="4" fill="url(#gp)"/><rect x="1218" y="131" width="44" height="4" fill="url(#gp)"/>
<rect class="g" x="1176.500" y="138.500" width="34" height="69" rx="4"/><path class="d" d="M1177 172.500h33"/>
<use href="#ec" x="1176" y="137"/>
<g transform="translate(1176,172)"><polygon points="10,22 30,22 24,33 4,33" fill="#f3a13c" stroke="#222"/><path d="M7 21l7-12 8-3-2 8-7 8z" fill="#f09a2a" stroke="#222"/><path d="M18 5l13-3-7 9z" fill="#111"/></g>
<rect class="g" x="1176.500" y="211.500" width="34" height="143" rx="4"/><path class="d" d="M1177 247h33M1177 283h33M1177 318.500h33"/>
<g transform="translate(1176,211)" fill="none" stroke="#515151" stroke-width="1.500"><path d="M4 26L28 6M4 18h6v12H4zM14 22h6v8h-6zM24 16h6v14h-6z"/></g>
<g transform="translate(1176,247)" fill="none" stroke="#515151" stroke-width="1.500"><path d="M6 30L26 8l3-2-2 5L12 27z"/></g>
<g transform="translate(1176,283)" fill="none" stroke="#515151" stroke-width="1.500"><path d="M5 11l13-5 11 5v13l-12 8-12-8zM10 13l16-1-8 14z"/></g>
<g transform="translate(1176,318)"><use href="#ec"/><path d="M12 14v14M22 14v14" stroke="#505050" fill="none"/></g>
<rect class="g" x="1176.500" y="357.500" width="34" height="107" rx="4"/><path class="d" d="M1177 393.500h33M1177 429h33"/>
<use href="#ec" x="1176" y="358"/>
<g transform="translate(1176,394)" fill="none" stroke="#515151" stroke-width="1.500"><path d="M5 14h24v18H5zM9 14v-8h16v8M10 22h14M13 14a5 5 0 0 1 8 0"/></g>
<g transform="translate(1176,429)" fill="none" stroke="#515151" stroke-width="1.500"><circle cx="6" cy="8" r="2.500"/><circle cx="6" cy="26" r="2.500"/><circle cx="28" cy="17" r="2.500"/><path d="M3 17h16M15 12l6 5-6 5"/></g>
<rect class="g" x="1176.500" y="467.500" width="34" height="71" rx="4"/><path class="d" d="M1177 503h33"/>
<g transform="translate(1176,467)" fill="none" stroke="#515151" stroke-width="1.500"><path d="M5 8v20M13 8v20M21 8v20M29 8v20M3 18h28M8 26L26 10"/></g>
<g transform="translate(1176,503)" fill="none" stroke="#515151" stroke-width="1.200"><path d="M9 10h22l-6 16H3zM6 18h22M16 10l-4 16M24 10l-5 16"/></g>
<rect class="g" x="1176.500" y="542.500" width="34" height="143" rx="4"/><path class="d" d="M1177 578h33M1177 614h33M1177 649.500h33"/>
<use href="#ec" x="1176" y="543"/><use href="#ec" x="1176" y="578"/>
<g transform="translate(1176,614)" fill="none" stroke="#515151" stroke-width="1.500"><path d="M14 4c7 6 12 14 15 24l-24 3c5-5 8-10 9-27zM9 20l18 2M12 12l10 1"/></g>
<use href="#ec" x="1176" y="650"/>

<rect class="g" x="1215.500" y="138.500" width="50" height="142" rx="4"/><path class="d" d="M1216 173.500h49M1216 209h49M1216 244.500h49"/>
<g transform="translate(1224,138)" fill="none" stroke="#515151" stroke-width="1.500"><path d="M3 6l7-3 6 3v9l-6 3-7-3zM17 6l7-3 6 3v9l-6 3-7-3zM3 19l7-3 6 3v9l-6 3-7-3zM17 19l7-3 6 3v9l-6 3-7-3z"/></g>
<g transform="translate(1224,174)" fill="none" stroke="#515151" stroke-width="1.500"><path d="M2 8l12-4 6 4-12 4zM8 17l12-4 6 4-12 4zM14 26l12-4 6 4-12 4z"/></g>
<use href="#ec" x="1224" y="208"/><use href="#ec" x="1224" y="245"/>
<rect class="g" x="1215.500" y="283.500" width="50" height="143" rx="4"/><path class="d" d="M1216 319h49M1216 355h49M1216 390.500h49"/>
<g transform="translate(1216,283)"><use href="#dw" y="7"/><use href="#or" x="4" y="0"/><use href="#pl" x="4" y="15"/><path d="M15 9.500h17M25 4l-5 11M13 24.500h17M24 19l-5 11" stroke="#222" stroke-width=".8"/></g>
<g transform="translate(1216,319)" opacity=".4"><use href="#dw" y="7"/><use href="#pl" x="4" y="0"/><use href="#pl" x="4" y="15"/></g>
<g transform="translate(1216,355)"><use href="#dw" y="7"/><use href="#gr" x="4" y="0"/><path d="M19 4l11 11" stroke="#f3a13c" stroke-width="2"/><use href="#or" x="4" y="15"/></g>
<g transform="translate(1216,391)" opacity=".4"><use href="#dw" y="7"/><use href="#pl" x="4" y="0"/><use href="#pl" x="4" y="15"/></g>
<rect class="g" x="1215.500" y="430.500" width="50" height="106" rx="4"/><path class="d" d="M1216 465.500h49M1216 501h49"/>
<g transform="translate(1216,430)"><use href="#dw" y="7"/><use href="#gr" x="4" y="0"/><use href="#or" x="4" y="15"/><path d="M15 24.500h17M24 19l-5 11" stroke="#222"/><use href="#gear" x="42" y="16"/></g>
<g transform="translate(1216,466)"><use href="#dw" y="7"/><use href="#gr" x="4" y="0"/><use href="#or" x="4" y="15"/><path d="M18 19l12 11" stroke="#222"/></g>
<g transform="translate(1216,501)"><use href="#dw" y="7"/><use href="#gr" x="4" y="0"/><path d="M19 4l11 11" stroke="#222"/><use href="#or" x="4" y="15"/><use href="#gear" x="42" y="16"/></g>
<rect class="g" x="1215.500" y="540.500" width="50" height="142" rx="4"/><path class="d" d="M1216 576h49M1216 611.500h49M1216 647h49"/>
<g transform="translate(1224,541)"><use href="#ed" transform="scale(.75)" opacity=".8"/><path d="M16 18l12-4M14 24h16M14 28h16" stroke="#666" fill="none"/></g>
<g transform="translate(1216,576)" opacity=".4"><use href="#dw" y="7"/><use href="#pl" x="4" y="0"/><use href="#pl" x="4" y="15"/></g>
<use href="#ec" x="1224" y="611"/>
<g transform="translate(1216,647)"><rect x="6" y="7" width="23" height="23" fill="#f3a13c" stroke="#222"/><path d="M6 30L29 7" stroke="#222"/><path d="M26 11h-9c-3 0-5 2-5 5v2h-3l5 6 5-6h-3v-1c0-1 1-2 2-2h8z" fill="#eee" stroke="#222" stroke-width=".7"/></g>
<rect class="g" x="1215.500" y="686.500" width="50" height="106" rx="4"/><path class="d" d="M1216 721.500h49M1216 757h49"/>
<g transform="translate(1216,686)"><circle cx="16" cy="17" r="10.500" fill="none" stroke="#222" stroke-width="8" stroke-dasharray="17 5" transform="rotate(-30 16 17)"/><circle cx="16" cy="17" r="10.500" fill="none" stroke="#f3a13c" stroke-width="6" stroke-dasharray="17 5" transform="rotate(-30 16 17)"/><use href="#gear" x="42" y="18"/></g>
<g transform="translate(1216,722)"><path d="M9 8v20h20" fill="none" stroke="#f5b31e" stroke-width="2.500"/><path d="M5 10l4-6 4 6zM26 24l6 4-6 4z" fill="#f5b31e"/><text x="13" y="19" style="font:bold 12px 'Liberation Sans';fill:#eee">=1</text><use href="#gear" x="42" y="18"/></g>
<g transform="translate(1216,757)"><polygon points="4,24 14,19 25,24 25,32 14,36 4,32" fill="#e88a1e" stroke="#333"/><path d="M4 24l10 4 11-4M14 28v8" stroke="#8a4f10" fill="none"/><circle cx="26" cy="13" r="6" fill="none" stroke="#eee" stroke-width="3"/><path d="M26 4v4M26 18v4M17 13h4M31 13h4M20 7l3 3M29 16l3 3M32 7l-3 3M23 16l-3 3" stroke="#eee" stroke-width="2.500"/></g>

<!-- timeline -->
<rect x="40" y="844" width="5" height="18" fill="url(#gp)"/>
<rect x="48.500" y="840.500" width="1145.500" height="22" rx="3" fill="#333" stroke="#2c2c2c"/>
<path d="M49 857h1145" stroke="#272727"/>
<rect x="50" y="840" width="9" height="17" fill="#4ddb85"/>
<g id="ticks"></g>
<path d="M431 842v18M809 842v18M1188 842v18" stroke="#777"/>
<g class="t" text-anchor="middle"><text x="62.500" y="851" style="font-size:12px;fill:#4ddb85">0</text>
<text x="115.600" y="851" class="l">5</text><text x="178.600" y="851" class="l">10</text><text x="241.500" y="851" class="l">15</text><text x="305" y="851" class="l">20</text><text x="368" y="851" class="l">25</text><text x="431" y="851" class="l">30</text><text x="494" y="851" class="l">35</text><text x="557" y="851" class="l">40</text><text x="620" y="851" class="l">45</text><text x="683" y="851" class="l">50</text><text x="746" y="851" class="l">55</text><text x="809" y="851" class="l">60</text><text x="872" y="851" class="l">65</text><text x="935" y="851" class="l">70</text><text x="998" y="851" class="l">75</text><text x="1061" y="851" class="l">80</text><text x="1124" y="851" class="l">85</text><text x="1186.500" y="851" class="l">90</text></g>
<rect class="f" x="1200.500" y="842.500" width="65" height="19" rx="2"/><text x="1205" y="856" class="l">0 F</text><path d="M1259 849l2-3 2 3zM1259 854l2 3 2-3z" fill="#999"/>
<rect x="40" y="870" width="5" height="21" fill="url(#gp)"/>
<rect class="f" x="48.500" y="870.500" width="66" height="20" rx="2"/><text x="53" y="885" class="l">0 F</text><path d="M107 877l2-3 2 3zM107 882l2 3 2-3z" fill="#999"/>
<rect x="120.500" y="870.500" width="566" height="19" rx="4" fill="url(#sl)" stroke="#333"/>
<path d="M132 875v10l-6-5zM675 875v10l6-5z" fill="#ccc"/>
<text x="137" y="884" class="l" style="fill:#bbb">0 F</text><text x="647" y="884" class="l" style="fill:#bbb">90 F</text>
<rect class="f" x="692.500" y="870.500" width="65.500" height="20" rx="2"/><text x="697" y="885" class="l">90 F</text><path d="M751 877l2-3 2 3zM751 882l2 3 2-3z" fill="#999"/>

<!-- transport -->
<rect class="g" x="769.500" y="867.500" width="27.500" height="26" rx="3"/><path d="M775 874h3v13h-3zM778 880.500l7-6.500v13zM785 880.500l7-6.500v13z" fill="#1a1a1a"/>
<rect class="g" x="807.500" y="867.500" width="139" height="26" rx="3"/><path class="d" d="M835 868v25M862.500 868v25M890.500 868v25M918.500 868v25"/>
<path d="M827 873a8 8 0 1 0 0 15v-4a4.500 4.500 0 1 1 0-7z" fill="#1a1a1a" stroke="#1a1a1a"/>
<path d="M843 881l8-6v12zM853 875c-3 3-3 9 0 12" fill="#1a1a1a" stroke="#1a1a1a"/>
<polygon points="870,873 884,881 870,889" fill="#3dde8f" stroke="#111"/>
<path d="M899 875c3 3 3 9 0 12M903 875l9 6-9 6z" fill="#1a1a1a" stroke="#1a1a1a"/>
<path d="M926 873a8 8 0 1 1 0 15v-4a4.500 4.500 0 1 0 0-7z" fill="#1a1a1a" stroke="#1a1a1a"/>
<rect class="g" x="957.500" y="867.500" width="27" height="26" rx="3"/><path d="M963 874l7 6.500-7 6.500zM970 874l7 6.500-7 6.500zM977 874h3v13h-3z" fill="#1a1a1a"/>
<rect class="g" x="995.500" y="867.500" width="83" height="26" rx="3"/><path class="d" d="M1022.500 868v25M1050.500 868v25"/>
<g stroke="#1a1a1a" stroke-width="1.500" fill="#e8515e"><circle cx="1009" cy="880.500" r="9.500"/><circle cx="1037" cy="880.500" r="9.500"/><circle cx="1065" cy="880.500" r="9.500"/></g>
<path d="M1004 886l7-7m0 0a3 3 0 1 0 2-3" stroke="#111" stroke-width="2.500" fill="none"/>
<path d="M1034 875c-3 3-3 8 0 11M1040 875c3 3 3 8 0 11" stroke="#111" stroke-width="2" fill="none"/>
<text x="1060.500" y="886" style="font:bold 15px 'Liberation Sans';fill:#111">?</text>
<rect class="g" x="1089.500" y="867.500" width="139" height="26" rx="3"/>
<rect x="1090" y="868" width="110" height="25" rx="2" fill="#8aa6cc"/>
<path d="M1117.500 868v25M1145 868v25M1172.500 868v25M1200 868v25" stroke="#5d6f8c"/>
<use href="#mv" transform="translate(1091,868) scale(.7)"/>
<g transform="translate(1124,871)"><rect width="18" height="18" fill="#f08a1e" stroke="#333"/><path d="M0 18l8-3v-5l10-3" fill="none" stroke="#333"/></g>
<g transform="translate(1146,868)"><path d="M16 3a9 9 0 0 1 3 17l1 2-7-2 4-5v2a6 6 0 0 0-1-11zM11 22a9 9 0 0 1-3-17l-1-2 7 2-4 5v-2a6 6 0 0 0 1 11z" fill="#f08a1e" stroke="#333" stroke-width=".5"/></g>
<circle cx="1186" cy="880.500" r="10.500" fill="#8aa6cc" stroke="#a96a28" stroke-width="2"/><text x="1180.500" y="886" style="font:bold 15px 'Liberation Sans';fill:#111">P</text>
<g fill="#f08a1e"><circle cx="1207" cy="873" r="2.200"/><circle cx="1214" cy="873" r="2.200"/><circle cx="1221" cy="873" r="2.200"/><circle cx="1207" cy="880" r="2.200"/><circle cx="1214" cy="880" r="2.200"/></g><g fill="#1a1a1a"><circle cx="1221" cy="880" r="2.200"/><circle cx="1207" cy="887" r="2.200"/><circle cx="1214" cy="887" r="2.200"/><circle cx="1221" cy="887" r="2.200"/></g>
<rect x="1240.500" y="867.500" width="26" height="26" rx="3" fill="#8aa6cc" stroke="#2c2c2c"/>
<g transform="translate(1247,870)"><rect width="12" height="21" fill="#c78a3e" stroke="#222"/><path d="M0 7h12M0 14h12M2 0v21M10 0v21" stroke="#222"/></g><path d="M1261 892h5v-5z" fill="#1a1a1a"/>

<!-- object panel bottom -->
<rect x="39.500" y="897.500" width="924" height="119" fill="#484848" stroke="#5e5e5e"/>
<path d="M40 922h923" stroke="#646464"/>
<rect x="46" y="904" width="11" height="12" fill="url(#gp)"/>
<text class="p" x="66" y="914.500">创建</text><text class="p" x="102" y="914.500">编辑</text><text class="p" x="138" y="914.500">功能</text><text class="p" x="174" y="914.500">纹理</text>
<!-- logo -->
<g transform="translate(16,1012) rotate(-90)"><text x="0" y="0" style="font:italic 900 16px 'Liberation Sans';fill:#8c8c8c" textLength="57" lengthAdjust="spacingAndGlyphs">MAXON</text></g>
<g transform="translate(33,1012) rotate(-90)"><text x="0" y="0" style="font-size:16px;fill:#7e7e7e" textLength="80" lengthAdjust="spacingAndGlyphs">CINEMA 4D</text></g>

<!-- coordinates -->
<rect x="967.500" y="897.500" width="299" height="119" fill="#484848" stroke="#5e5e5e"/>
<path d="M968 918h298" stroke="#646464"/>
<rect x="973" y="903" width="11" height="12" fill="url(#gp)"/>
<text class="p" x="991" y="912">位置</text><text class="p" x="1084" y="912">尺寸</text><text class="p" x="1177" y="912">旋转</text>
<g class="f"><rect class="f" x="982.500" y="924.500" width="83" height="19" rx="2"/><rect class="f" x="982.500" y="947.500" width="83" height="19" rx="2"/><rect class="f" x="982.500" y="970.500" width="83" height="19" rx="2"/><rect class="f" x="1080.500" y="924.500" width="84" height="19" rx="2"/><rect class="f" x="1080.500" y="947.500" width="84" height="19" rx="2"/><rect class="f" x="1080.500" y="970.500" width="84" height="19" rx="2"/><rect class="f" x="1180.500" y="924.500" width="82" height="19" rx="2"/><rect class="f" x="1180.500" y="947.500" width="82" height="19" rx="2"/><rect class="f" x="1180.500" y="970.500" width="82" height="19" rx="2"/></g>
<g class="l"><text class="l" x="970.500" y="938">X</text><text class="l" x="970.500" y="961">Y</text><text class="l" x="970.500" y="984">Z</text><text class="l" x="1068" y="938">X</text><text class="l" x="1068" y="961">Y</text><text class="l" x="1068" y="984">Z</text><text class="l" x="1167" y="938">H</text><text class="l" x="1167" y="961">P</text><text class="l" x="1167" y="984">B</text>
<text class="l" x="987" y="938">-39.063 cm</text><text class="l" x="987" y="961">0 cm</text><text class="l" x="987" y="984">0 cm</text><text class="l" x="1085" y="938">1</text><text class="l" x="1085" y="961">1</text><text class="l" x="1085" y="984">1</text><text class="l" x="1185" y="938">0 °</text><text class="l" x="1185" y="961">0 °</text><text class="l" x="1185" y="984">0 °</text></g>
<path d="M1059 932l2-3 2 3zM1059 936l2 3 2-3zM1059 955l2-3 2 3zM1059 959l2 3 2-3zM1059 978l2-3 2 3zM1059 982l2 3 2-3zM1158 932l2-3 2 3zM1158 936l2 3 2-3zM1158 955l2-3 2 3zM1158 959l2 3 2-3zM1158 978l2-3 2 3zM1158 982l2 3 2-3zM1255 932l2-3 2 3zM1255 936l2 3 2-3zM1255 955l2-3 2 3zM1255 959l2 3 2-3zM1255 978l2-3 2 3zM1255 982l2 3 2-3z" fill="#999"/>
<rect x="982.500" y="996.500" width="82" height="18" rx="3" fill="#5a5a5a"/><text x="989" y="1009.500" style="fill:#888">世界坐标</text><path d="M1053 1004h8l-4 4z" fill="#888"/>
<rect x="1080.500" y="996.500" width="83" height="18" rx="3" fill="#5a5a5a"/><text x="1087" y="1009.500" style="fill:#888">缩放比例</text><path d="M1151 1004h8l-4 4z" fill="#888"/>
<rect x="1180.500" y="996.500" width="82" height="18" rx="8" fill="url(#cb)" stroke="#333"/><text x="1210" y="1009.500" style="fill:#d0d0d0">应用</text>

<!-- status bar -->
<rect x="0.500" y="1020.500" width="1266" height="19" fill="#484848" stroke="#5a5a5a"/>
<rect x="4" y="1024" width="12" height="12" fill="url(#gp)"/>
<text x="25.500" y="1034" style="fill:#b0b0b0">连接多个对象到新对象</text>
<path d="M1269.500 545v495" stroke="#5a5a5a"/>

<!-- object manager -->
<rect x="1270" y="51" width="627" height="24" fill="#686868"/>
<rect x="1276" y="57" width="12" height="13" fill="url(#gp)"/>
<text x="1297" y="68" style="fill:#a8a8a8">文件</text>
<path d="M1270 76.500h624" stroke="#2e2e2e"/>
<rect x="1271" y="78" width="623" height="20" fill="#4e4e4e"/><rect x="1271" y="118" width="623" height="20" fill="#505050"/><rect x="1271" y="158" width="623" height="20" fill="#505050"/>
<rect x="1270.500" y="76.500" width="624" height="463.500" fill="none" stroke="#5f5f5f"/>
<path d="M1280 78v25M1280 112v30M1280 88h8M1291 118v10h6M1291 158v10h6" stroke="#8a8a8a" fill="none"/>
<rect x="1275.500" y="103.500" width="9" height="9" fill="none" stroke="#999"/><path d="M1277 108h6" stroke="#ccc"/><rect x="1275.500" y="143.500" width="9" height="9" fill="none" stroke="#999"/><path d="M1277 148h6" stroke="#ccc"/>
<polygon points="1296,82 1302,94 1290,94" fill="#6fb5ee" stroke="#fff" stroke-width=".6"/>
<polygon points="1296,103 1301,113 1291,113" fill="#35d083"/><path d="M1303 104v8M1301 110l2 3 2-3" stroke="#eee" fill="none"/>
<polygon points="1307,122 1313,134 1301,134" fill="#6fb5ee" stroke="#fff" stroke-width=".6"/>
<text x="1291" y="154" style="font:bold 17px 'Liberation Serif';fill:#35d083">T</text>
<circle cx="1307" cy="168" r="5.500" fill="#5468b8"/>
<text x="1307" y="92">减面</text><text x="1307" y="112" style="fill:#f3a932">减面</text><text x="1318" y="132" style="fill:#f3a932">D</text><text x="1307" y="152">文本</text><text x="1318" y="172">置</text>
<g transform="translate(1821,57)"><circle cx="6" cy="5" r="4" fill="none" stroke="#1a1a1a" stroke-width="1.500"/><path d="M9 8l5 6" stroke="#1a1a1a" stroke-width="2"/></g>
<path d="M1849 57l6 6h-2v7h-8v-7h-2z" fill="none" stroke="#111" stroke-width="2"/>
<ellipse cx="1868" cy="64.500" rx="6" ry="2.500" fill="none" stroke="#333"/>
<rect x="1880.500" y="56.500" width="11" height="14" fill="#777" stroke="#222"/><rect x="1881" y="57" width="10" height="3" fill="#222"/><path d="M1886 62v7M1882.500 65.500h7" stroke="#111"/>

<!-- interface combo -->
<text x="1740" y="37" style="fill:#aaa">界面:</text>
<rect x="1769.500" y="25.500" width="127" height="18" rx="3" fill="url(#cb)" stroke="#3a3a3a"/>
<text x="1776" y="37" style="fill:#bdbdbd">启动 (用户)</text><path d="M1885 32h8l-4 4z" fill="#ccc"/>
<g transform="translate(1905,27)"><circle cx="4" cy="5" r="3.500" fill="none" stroke="#1a1a1a" stroke-width="1.500"/><path d="M7 8l4 6" stroke="#1a1a1a" stroke-width="2"/></g>

<!-- side tabs -->
<rect x="1897" y="52" width="21" height="33" rx="2" fill="#6a6a6a"/><rect x="1897" y="87" width="21" height="31" rx="2" fill="#3f3f3f"/><rect x="1897" y="120" width="21" height="65" rx="2" fill="#3f3f3f"/><rect x="1897" y="187" width="21" height="33" rx="2" fill="#3f3f3f"/>
<g transform="translate(1903,57) rotate(90)"><text style="fill:#f3a932">对象</text></g>
<g transform="translate(1903,92) rotate(90)"><text style="fill:#888">场次</text></g>
<g transform="translate(1903,125) rotate(90)"><text style="fill:#888">内容浏览器</text></g>
<g transform="translate(1903,192) rotate(90)"><text style="fill:#888">构造</text></g>
<rect x="1898" y="546" width="21" height="32" rx="2" fill="#6a6a6a"/><rect x="1898" y="580" width="21" height="21" rx="2" fill="#3a3a3a"/>
<g transform="translate(1904,551) rotate(90)"><text style="fill:#f3a932">属性</text></g>
<g transform="translate(1904,585) rotate(90)"><text style="fill:#888">层</text></g>

<!-- avatar -->
<circle cx="1888" cy="325" r="23" fill="#fff" stroke="#2a8fff" stroke-width="3"/><circle cx="1888" cy="325" r="20.500" fill="none" stroke="#111"/>
<path d="M1882 322h12l-2 9-4 6-4-6z" fill="#111"/><path d="M1883 321l-6-8M1879 316l-5 1M1880 313l-2-4M1893 321l6-8M1897 316l5 1M1896 313l2-4" stroke="#111" stroke-width="1.300" fill="none"/>
<text x="1878" y="342" style="font-size:6.500px;fill:#111;font-weight:bold">行美志</text>

<!-- attribute manager -->
<path d="M1270 545h627" stroke="#5f5f5f"/><path d="M1270 570h627" stroke="#353535"/>
<rect x="1277" y="552" width="10" height="12" fill="url(#gp)"/>
<text x="1297" y="562" style="fill:#a8a8a8">模式</text>
<path d="M1751 558l17-7v14z" fill="#111"/><path d="M1786 558l-17-7v14z" fill="#555" opacity=".6"/><path d="M1802 551l7 19-7-4-7 4z" fill="#111"/>
<g transform="translate(1822,550)"><circle cx="4.500" cy="5" r="3.500" fill="none" stroke="#1a1a1a" stroke-width="1.500"/><path d="M7 8l4 6" stroke="#1a1a1a" stroke-width="2"/></g>
<rect x="1846" y="558" width="10" height="8" fill="none" stroke="#1a1a1a" stroke-width="1.500"/><path d="M1848 558v-3a3 3 0 0 1 6-1" fill="none" stroke="#1a1a1a" stroke-width="1.500"/>
<circle cx="1868" cy="558" r="6.500" fill="none" stroke="#1a1a1a"/><circle cx="1868" cy="558" r="3.500" fill="none" stroke="#1a1a1a"/><circle cx="1868" cy="558" r="1" fill="#1a1a1a"/>
<rect x="1881.500" y="551" width="10" height="14" fill="#777" stroke="#222"/><rect x="1882" y="551" width="9" height="3" fill="#222"/><path d="M1886.500 556v7M1883 559.500h7" stroke="#111"/>
<g transform="translate(1274,574)"><circle cx="7" cy="11" r="5.500" fill="#ddd" stroke="#d9552a"/><circle cx="15" cy="5" r="4.500" fill="#ddd" stroke="#d9552a"/><path d="M15 10c2 4 4 6 4 8a4 4 0 0 1-8 0c0-2 2-4 4-8z" fill="#eee"/></g>
<text x="1299" y="588" style="font-size:12px">2 元素</text>
<rect x="1274.500" y="598.500" width="29" height="19" rx="3" fill="#8aa6cc" stroke="#333"/><text x="1277" y="612" style="fill:#111">基本</text>
<rect x="1303.500" y="598.500" width="30" height="19" fill="#666" stroke="#333"/><text x="1306" y="612" style="fill:#bbb">坐标</text>
<rect x="1273" y="623" width="619" height="18" fill="#383838"/><text x="1275" y="636" style="fill:#c0c0c0">基本属性</text>
<text x="1293" y="660" style="fill:#a8a8a8">名称 . .</text><text x="1293" y="683" style="fill:#a8a8a8">图层 . .</text>
<text x="1293" y="705" style="fill:#a8a8a8">编辑器可见</text><text x="1293" y="726" style="fill:#a8a8a8">渲染器可见</text><text x="1293" y="747" style="fill:#a8a8a8">使用颜色</text><text x="1293" y="768" style="fill:#777">显示颜色</text><text x="1293" y="789" style="fill:#a8a8a8">透显 . .</text>
<g fill="#5c5c5c" stroke="#333" stroke-width="1"><circle cx="1282" cy="701" r="5.500"/><circle cx="1282" cy="722" r="5.500"/><circle cx="1282" cy="743" r="5.500"/><circle cx="1282" cy="785" r="5.500"/></g>
<circle cx="1282" cy="764" r="4" fill="#4a4a4a" stroke="#3a3a3a"/>
<rect class="f" x="1500" y="646.500" width="389" height="18.500" rx="2"/>
<rect class="f" x="1500" y="669.500" width="359" height="18.500" rx="2"/>
<rect x="1861.500" y="669.500" width="10" height="19" rx="2" fill="#6a6a6a"/><path d="M1865 676l3 3-3 3z" fill="#ddd"/>
<circle cx="1883" cy="679" r="8" fill="#ccc" stroke="#333"/><path d="M1879 674l9 5-4 1 2 4-2 1-2-4-3 2z" fill="#111"/>
<rect x="1500" y="692.500" width="390" height="18" rx="3" fill="url(#cb)" stroke="#333"/><rect x="1500" y="713.500" width="390" height="18" rx="3" fill="url(#cb)" stroke="#333"/><rect x="1500" y="734.500" width="390" height="18" rx="3" fill="url(#cb)" stroke="#333"/>
<path d="M1878 699h8l-4 4zM1878 720h8l-4 4zM1878 741h8l-4 4z" fill="#ccc"/>

<!-- popup menu -->
<rect x="1330.500" y="0.500" width="276" height="1039" rx="3" fill="#484848" stroke="#262626"/>
<path d="M1463 15v-6a5 5 0 0 1 10 0v6z" fill="#3a3a3a"/>
<rect x="1333" y="15" width="22" height="460" fill="#5f5f5f"/>
<rect x="1333" y="482" width="22" height="45" fill="#5f5f5f"/>
<rect x="1333" y="536" width="22" height="46" fill="#5f5f5f"/>
<rect x="1333" y="589" width="22" height="46" fill="#5f5f5f"/>
<rect x="1333" y="642" width="22" height="46" fill="#5f5f5f"/>
<rect x="1333" y="695" width="22" height="46" fill="#5f5f5f"/>
<rect x="1333" y="748" width="22" height="92" fill="#5f5f5f"/>
<rect x="1333" y="847" width="22" height="92" fill="#5f5f5f"/>
<rect x="1333" y="946" width="22" height="69" fill="#5f5f5f"/>
<rect x="1333" y="1021" width="22" height="5" fill="#5f5f5f"/>
<path d="M1335 478.500h268M1335 531.500h268M1335 584.500h268M1335 637.500h268M1335 690.500h268M1335 743.500h268M1335 842.500h268M1335 941.500h268M1335 1017.500h268" stroke="#2f2f2f"/>
<g>
<text class="p" x="1360" y="31" style="font-size:11.500px">CINEMA 4D 标签</text>
<text class="p" x="1360" y="54" style="font-size:11.500px">C4doctane 标签</text>
<text class="p" x="1360" y="77" style="font-size:11.500px">Cineman 标签</text>
<text class="p" x="1360" y="100" style="font-size:11.500px">Greebler 标签</text>
<text class="p" x="1360" y="123" style="font-size:11.500px">Krakatoa 标签</text>
<text class="p" x="1360" y="146" style="font-size:11.500px">MeshBoolean 标签</text>
<text class="p" x="1360" y="169" style="font-size:11.500px">MoGraph 标签</text>
<text class="p" x="1360" y="192" style="font-size:11.500px">RealFlow 标签</text>
<text class="p" x="1360" y="215" style="font-size:11.500px" textLength="173" lengthAdjust="spacingAndGlyphs">TurbulenceFD C4D v1.0.1435 标签</text>
<text class="p" x="1360" y="238" style="font-size:11.500px">UVW标签</text>
<text class="p" x="1360" y="261" style="font-size:11.500px">X-Particles 2.1 标签</text>
<text class="p" x="1360" y="284">模拟标签</text>
<text class="p" x="1360" y="307">毛发标签</text>
<text class="p" x="1360" y="330">脚本标签</text>
<text class="p" x="1360" y="353">草绘标签</text>
<text class="p" x="1360" y="376">角色 标签</text>
<text class="p" x="1360" y="399">运动摄像机标签</text>
<text class="p" x="1360" y="422">运动跟踪标签</text>
<text class="p" x="1360" y="445" style="font-size:11.500px">HDRI Link</text>
<text class="p" x="1359" y="468" style="font-size:11.500px">Snap To Floor</text>
<text class="p" x="1360" y="498">加载标签预置</text>
<text class="p" x="1360" y="521">恢复选集</text>
<text class="p" x="1360" y="551">加入新层</text>
<text class="p" x="1360" y="574">层管理器...</text>
<text class="p" x="1360" y="604">从所有场次中移除</text>
<text class="p" x="1360" y="627">场次管理器...</text>
<text class="p" x="1360" y="657">选择子级</text>
<text class="p" x="1360" y="680">设为根部</text>
<text class="p" x="1360" y="710">全部展开</text>
<text class="p" x="1360" y="733">全部折叠</text>
<text class="p" x="1360" y="763">转为可编辑对象</text>
<text class="p" x="1360" y="786">当前状态转对象</text>
<text class="p" x="1360" y="832">连接对象+删除</text>
<text class="p" x="1360" y="862">群组对象</text>
<text class="p" x="1360" y="885">展开群组</text>
<text class="p" x="1360" y="908">删除(不包含子级)</text>
<text class="p" x="1360" y="931">将所选对象转换为XRef</text>
<text class="p" x="1360" y="961">显示时间线窗口...</text>
<text class="p" x="1360" y="984">显示函数曲线...</text>
<text class="p" x="1360" y="1007">显示运动...</text>
</g>
<g text-anchor="end"><text class="p" x="1585" y="574">Shift+F4</text><text class="p" x="1585" y="763">C</text><text class="p" x="1585" y="862">Alt+G</text><text class="p" x="1585" y="885">Shift+G</text></g>
<path d="M1594 23l4 4-4 4zM1594 46l4 4-4 4zM1594 69l4 4-4 4zM1594 92l4 4-4 4zM1594 115l4 4-4 4zM1594 138l4 4-4 4zM1594 161l4 4-4 4zM1594 184l4 4-4 4zM1594 207l4 4-4 4zM1594 230l4 4-4 4zM1594 253l4 4-4 4zM1594 276l4 4-4 4zM1594 299l4 4-4 4zM1594 322l4 4-4 4zM1594 345l4 4-4 4zM1594 368l4 4-4 4zM1594 391l4 4-4 4zM1594 414l4 4-4 4zM1593 490l4 4-4 4zM1593 513l4 4-4 4z" fill="#c0c0c0"/>
<!-- popup icons -->
<circle cx="1344" cy="441" r="9" fill="#eee" stroke="#333"/><path d="M1336 438h16M1336 444h16M1340 436l-3 2 3 2M1348 442l3 2-3 2" stroke="#333" fill="none"/>
<path d="M1344 456v9" stroke="#eee" stroke-width="2"/><path d="M1341 462l3 4 3-4z" fill="#eee"/><polygon points="1344,465 1351,470 1344,474 1337,470" fill="#6680e0"/>
<rect x="1333" y="559" width="22" height="23" fill="#8aa6cc"/><rect x="1333" y="612" width="22" height="23" fill="#8aa6cc"/>
<g transform="translate(1333,536)"><rect x="5" y="4" width="14" height="14" fill="none" stroke="#ddd"/><circle cx="10" cy="10" r="6" fill="#e0602a"/><path d="M14 18h7M17.500 14v8" stroke="#eee" stroke-width="2"/></g>
<g transform="translate(1333,559)"><rect x="3" y="4" width="16" height="16" fill="#eee" stroke="#222"/><rect x="3" y="4" width="16" height="3" fill="#222"/><circle cx="11" cy="13" r="5" fill="none" stroke="#e0602a" stroke-width="2"/></g>
<g transform="translate(1333,589)"><circle cx="11" cy="11" r="8" fill="none" stroke="#e0602a" stroke-width="2.500"/><circle cx="11" cy="11" r="3.500" fill="none" stroke="#e0602a" stroke-width="2"/><path d="M12 18h9" stroke="#eee" stroke-width="2"/></g>
<g transform="translate(1333,612)"><rect x="3" y="4" width="16" height="16" fill="#eee" stroke="#222"/><rect x="3" y="4" width="16" height="3" fill="#222"/><circle cx="11" cy="13" r="6" fill="#e0602a"/><path d="M8 10l6 6M14 10l-6 6" stroke="#222" stroke-width="1.500"/></g>
<g transform="translate(1333,642)"><rect x="2" y="3" width="9" height="5" fill="#eee"/><rect x="9" y="9" width="9" height="5" fill="#eee"/><path d="M8 8v6" stroke="#eee"/><circle cx="15" cy="18" r="5" fill="#e0602a"/></g>
<g transform="translate(1333,665)"><path d="M3 11l8-8 8 8h-3v9H6v-9z" fill="#111" stroke="#eee" stroke-width=".5"/><path d="M8 12h6v6H8z" fill="#e0602a"/><rect x="12" y="14" width="8" height="7" fill="#eee" stroke="#222"/></g>
<use href="#bd" x="1333" y="695"/><rect x="1340" y="696" width="8" height="7" fill="#e0602a"/><path d="M1342 699.500h4" stroke="#fff"/>
<use href="#bd" x="1333" y="718"/><rect x="1340" y="719" width="8" height="7" fill="#e0602a"/><path d="M1342 722.500h4M1344 720.500v4" stroke="#fff"/>
<g transform="translate(1333,748)"><circle cx="9" cy="8" r="7" fill="#ddd"/><circle cx="14" cy="15" r="6" fill="#d9552a" stroke="#222"/><path d="M8 15h12M14 9v12" stroke="#ddd" stroke-width=".7"/></g>
<g transform="translate(1333,771)"><path d="M3 5l11-2 4 3v12l-8 3-6-6z" fill="#d9601e" stroke="#333"/><path d="M17 12v8M15 18l2 3 2-3" stroke="#eee"/></g>
<rect x="1332" y="792.500" width="272" height="25" fill="#999"/>
<rect x="1329.500" y="792.500" width="272" height="26" fill="none" stroke="#e0202c" stroke-width="2.500"/>
<text x="1360" y="809" style="fill:#000">连接对象</text>
<circle cx="1339" cy="811" r="4" fill="#bbb" stroke="#d9552a" stroke-width="1.300"/><circle cx="1349" cy="811" r="4" fill="#bbb" stroke="#d9552a" stroke-width="1.300"/><path d="M1344 797v9l-7 6M1344 806l7 6" fill="none" stroke="#d9552a" stroke-width="2.500"/><path d="M1340 799l4-5 4 5z" fill="#d9552a"/>
<path d="M1344 817v13l-8 8M1344 830l8 8" fill="none" stroke="#e0602a" stroke-width="2.500"/><path d="M1341 821l3-4 3 4z" fill="#e0602a"/>
<use href="#bd" x="1333" y="849"/><rect x="1340" y="848" width="8" height="6" fill="#e0602a"/><path d="M1344 854v5" stroke="#ddd"/>
<use href="#bd" x="1333" y="872"/><rect x="1334" y="871" width="8" height="4" fill="#e0602a"/><rect x="1346" y="871" width="8" height="4" fill="#e0602a"/><path d="M1338 875v4M1350 875v4" stroke="#ddd"/>
<circle cx="1344" cy="900" r="4.500" fill="#ddd"/><path d="M1344 905v6" stroke="#ddd"/><rect x="1339" y="909" width="8" height="5" fill="#e0602a"/><path d="M1348 912h6" stroke="#eee"/>
<g transform="translate(1333,916)"><circle cx="15" cy="6" r="4" fill="#ddd"/><circle cx="8" cy="11" r="2.500" fill="#ddd"/><path d="M3 14c2 6 6 7 9 5M12 14c-3 1-5 3-6 7" stroke="#e0602a" stroke-width="2" fill="none"/><path d="M13 18h8M18 15l3 3-3 3" stroke="#eee" fill="none"/></g>
<g transform="translate(1333,946)"><path d="M5 16L18 4" stroke="#e0602a" stroke-width="3"/><circle cx="6" cy="16" r="4" fill="none" stroke="#e0602a" stroke-width="1.500"/><path d="M13 5l3-2 3 4" fill="#e0602a"/><use href="#ey"/></g>
<g transform="translate(1333,969)"><text x="3" y="16" style="font:italic 18px 'Liberation Serif';fill:#e0602a">f</text><path d="M12 8l2 4 2-6 2 6" stroke="#222" fill="none"/><use href="#ey"/></g>
<g transform="translate(1333,992)"><rect x="3" y="3" width="4" height="18" fill="#e0602a"/><rect x="10" y="6" width="4" height="10" fill="#e0602a"/><rect x="16" y="3" width="4" height="10" fill="#e0602a"/><use href="#ey"/></g>
<path d="M1463 1024h8l-1 8-3 4-3-4z" fill="#333"/><path d="M1465 1027h4l-2 4z" fill="#aaa"/>

<!-- red annotation arrows -->
<g fill="#e8232c" stroke="#e8232c"><path d="M1230 156L1268 139" stroke-width="2.500"/><polygon points="1282,133 1265,134 1270,144" stroke="none"/>
<path d="M1250 833L1289 821" stroke-width="2.500"/><polygon points="1301,816 1284,815 1288,826" stroke="none"/></g>
</svg>
<script>
(function(){
var a=.105,b=.122,N=35,s='',g=document.getElementById('grid');
var X0=80,X1=1170,Y0=154,Y1=835;
function P(u,v){var w=1+u*a+v*b;return [(625-675*u*a+1612*v*b)/w,(632+181*(u*a+v*b))/w]}
function C(p,q){var t0=0,t1=1,dx=q[0]-p[0],dy=q[1]-p[1],A=[-dx,dx,-dy,dy],B=[p[0]-X0,X1-p[0],p[1]-Y0,Y1-p[1]];
 for(var k=0;k<4;k++){if(A[k]==0){if(B[k]<0)return null}else{var r=B[k]/A[k];if(A[k]<0){if(r>t1)return null;if(r>t0)t0=r}else{if(r<t0)return null;if(r<t1)t1=r}}}
 return [(p[0]+t0*dx).toFixed(1),(p[1]+t0*dy).toFixed(1),(p[0]+t1*dx).toFixed(1),(p[1]+t1*dy).toFixed(1)]}
function L(p,q,i){var c=C(p,q);if(!c)return;var m=i%10==0;s+='<path d="M'+c[0]+' '+c[1]+'L'+c[2]+' '+c[3]+'" stroke="#2e2e2e" stroke-opacity="'+(m?.75:.36)+'" stroke-width="'+(m?1:.9)+'"/>'}
for(var i=-N;i<=N;i++){
 var v0=Math.max(-N,(.03-1-i*a)/b);if(v0<N)L(P(i,v0),P(i,N),i);
 var u0=Math.max(-N,(.03-1-i*b)/a);if(u0<N)L(P(u0,i),P(N,i),i);
}
g.innerHTML=s;
var t='';for(var f=0;f<=90;f++){var x=54.5+12.59*f;t+='<path d="M'+x.toFixed(1)+' '+(f%5==0?858:860)+'V862" stroke="#cfcfcf"/>'}
document.getElementById('ticks').innerHTML=t;
})();
</script>
</body></html>
